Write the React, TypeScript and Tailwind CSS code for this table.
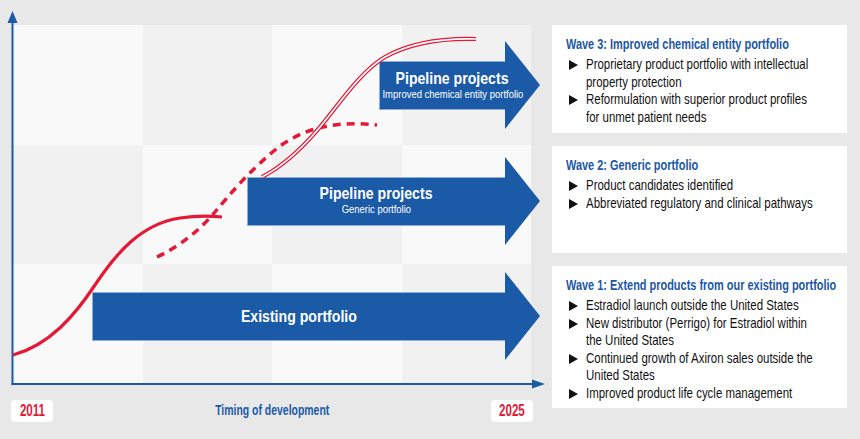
const FONT = { fontFamily: '"Liberation Sans", Arial, sans-serif' };

const cells = [
  "bg-[#f9f9f9]", "bg-[#f1f1f1]", "bg-[#f9f9f9]", "bg-[#f1f1f1]",
  "bg-[#f1f1f1]", "bg-[#f9f9f9]", "bg-[#f1f1f1]", "bg-[#f9f9f9]",
  "bg-[#f9f9f9]", "bg-[#f1f1f1]", "bg-[#f9f9f9]", "bg-[#f1f1f1]",
];

interface Wave {
  title: string;
  bullets: string[][];
  height: string;
}

const waves: Wave[] = [
  {
    title: "Wave 3: Improved chemical entity portfolio",
    bullets: [
      ["Proprietary product portfolio with intellectual", "property protection"],
      ["Reformulation with superior product profiles", "for unmet patient needs"],
    ],
    height: "h-[108px]",
  },
  {
    title: "Wave 2: Generic portfolio",
    bullets: [["Product candidates identified"], ["Abbreviated regulatory and clinical pathways"]],
    height: "h-[107px]",
  },
  {
    title: "Wave 1: Extend products from our existing portfolio",
    bullets: [
      ["Estradiol launch outside the United States"],
      ["New distributor (Perrigo) for Estradiol within", "the United States"],
      ["Continued growth of Axiron sales outside the", "United States"],
      ["Improved product life cycle management"],
    ],
    height: "h-[142px]",
  },
];

function Arrow({
  className,
  bodyWidth,
  textPad,
  title,
  subtitle,
}: {
  className: string;
  bodyWidth: string;
  textPad: string;
  title: string;
  subtitle?: string;
}) {
  return (
    <div className={`absolute flex items-center ${className}`}>
      <div className={`h-[49px] ${bodyWidth} bg-[#1b5aa7] border border-[#8eaedb]`} />
      <div
        className="h-[88px] w-[35px] -ml-px bg-[#1b5aa7]"
        style={{ clipPath: "polygon(0 0, 100% 50%, 0 100%)" }}
      />
      <div
        className={`absolute inset-0 flex flex-col items-center justify-center text-white whitespace-nowrap ${textPad}`}
        style={FONT}
      >
        <div className="font-bold text-[17px] leading-[19px] scale-x-[0.83]">{title}</div>
        {subtitle && <div className="text-[11px] leading-[13px] scale-x-[0.86]">{subtitle}</div>}
      </div>
    </div>
  );
}

function Chart() {
  return (
    <div className="relative w-[552px] h-[439px] shrink-0">
      <div className="pt-[25px] pl-[13px]">
        <div className="relative w-[518px] h-[359px] grid grid-cols-4 grid-rows-3">
          {cells.map((c, i) => (
            <div key={i} className={c} />
          ))}
        </div>
      </div>

      <div className="flex items-center justify-between pl-[11px] pr-[19px] mt-[16px]" style={FONT}>
        <div className="w-[42px] h-[22px] rounded-[4px] bg-white flex items-center justify-center text-[#e31937] text-[17px] font-bold">
          <span className="scale-x-[0.68]">2011</span>
        </div>
        <div className="text-[#1b5aa7] text-[14.5px] font-bold scale-x-[0.72]">Timing of development</div>
        <div className="w-[42px] h-[22px] rounded-[4px] bg-white flex items-center justify-center text-[#e31937] text-[17px] font-bold">
          <span className="scale-x-[0.68]">2025</span>
        </div>
      </div>

      <svg className="absolute inset-0 pointer-events-none" width="552" height="439" viewBox="0 0 552 439">
        {/* axes */}
        <line x1="12.5" y1="385" x2="12.5" y2="20" stroke="#1b5aa7" strokeWidth="2" />
        <polygon points="7.5,23 12.5,11 17.5,23" fill="#1b5aa7" />
        <line x1="11.5" y1="384" x2="534" y2="384" stroke="#1b5aa7" strokeWidth="2" />
        <polygon points="532,379.5 545,384 532,388.5" fill="#1b5aa7" />
      </svg>

      <Arrow
        className="left-[92px] top-[272px]"
        bodyWidth="w-[414px]"
        textPad="pr-[34px]"
        title="Existing portfolio"
      />
      <Arrow
        className="left-[247px] top-[157px]"
        bodyWidth="w-[259px]"
        textPad="pr-[34px] pb-[2px]"
        title="Pipeline projects"
        subtitle="Generic portfolio"
      />
      <Arrow
        className="left-[379px] top-[41px]"
        bodyWidth="w-[127px]"
        textPad="pr-[14px]"
        title="Pipeline projects"
        subtitle="Improved chemical entity portfolio"
      />

      <svg className="absolute inset-0 pointer-events-none" width="552" height="439" viewBox="0 0 552 439">
        {/* existing portfolio curve */}
        <path
          d="M13,355 C50,345 75,315 95,285 C115,255 140,224 180,218 C200,215 212,216 222,217"
          fill="none"
          stroke="#e31937"
          strokeWidth="3.2"
        />
        {/* generic portfolio curve */}
        <path
          d="M157,257 C180,246 200,230 215,212 C230,194 252,168 280,146 C308,126 340,121 377,125"
          fill="none"
          stroke="#e31937"
          strokeWidth="3.5"
          strokeDasharray="8 6"
        />
        {/* improved chemical entity curve */}
        <g fill="none">
          <path
            d="M262,177 C285,165 305,145 320,127 C340,103 360,72 385,57 C410,43 440,38 476,39"
            stroke="#e31937"
            strokeWidth="4.2"
          />
          <path
            d="M262,177 C285,165 305,145 320,127 C340,103 360,72 385,57 C410,43 440,38 476,39"
            stroke="#ffffff"
            strokeWidth="1.6"
          />
        </g>
      </svg>
    </div>
  );
}

function WavePanel({ wave }: { wave: Wave }) {
  return (
    <div className={`bg-white w-[295px] ${wave.height} pt-[10px] pl-[14px] overflow-hidden`} style={FONT}>
      <div className="text-[#1c58a5] text-[14.5px] font-bold leading-[18px] whitespace-nowrap origin-left scale-x-[0.755]">
        {wave.title}
      </div>
      <div className="mt-[3px]">
        {wave.bullets.map((lines, i) => (
          <div key={i} className="flex text-[#111111] text-[14.5px] leading-[17.5px]">
            <span className="w-[20px] shrink-0 pl-[3px] pt-[4px]">
              <svg width="9" height="10" viewBox="0 0 9 10">
                <polygon points="0,0 9,5 0,10" fill="#111111" />
              </svg>
            </span>
            <span className="whitespace-nowrap origin-left scale-x-[0.79]">
              {lines.map((l, j) => (
                <span key={j}>
                  {j > 0 && <br />}
                  {l}
                </span>
              ))}
            </span>
          </div>
        ))}
      </div>
    </div>
  );
}

export default function App() {
  return (
    <div className="w-[860px] h-[439px] bg-[#e8e8e8] flex overflow-hidden">
      <Chart />
      <div className="flex flex-col gap-[13px] pt-[25px]">
        {waves.map((w, i) => (
          <WavePanel key={i} wave={w} />
        ))}
      </div>
    </div>
  );
}
